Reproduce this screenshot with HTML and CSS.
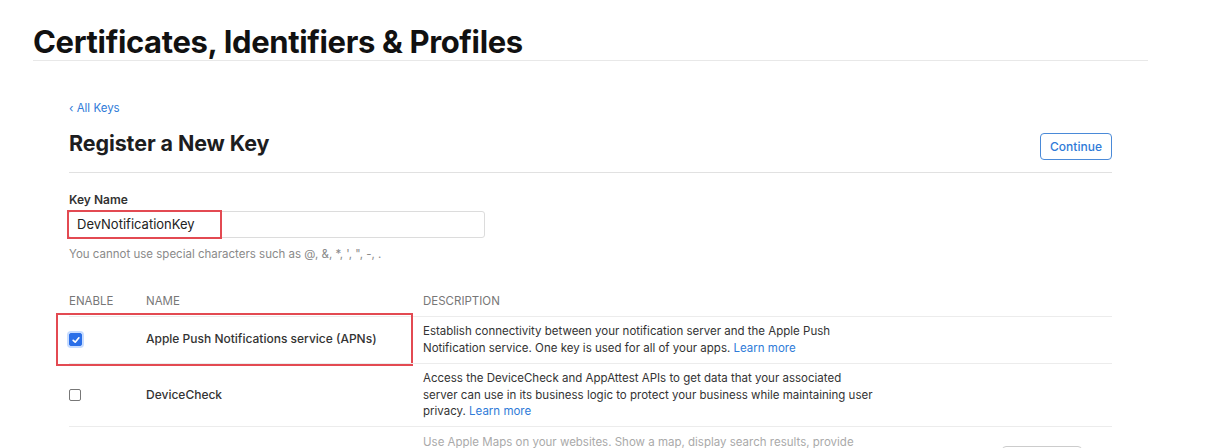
FILE: index.html
```html
<!DOCTYPE html>
<html lang="en">
<head>
<meta charset="utf-8">
<title>Register a New Key</title>
<link rel="stylesheet" href="styles.css">
</head>
<body>
<div class="page">
  <header class="top">
    <h1 class="top-title">Certificates, Identifiers &amp; Profiles</h1>
  </header>
  <main class="content">
    <a class="back" href="#">&lsaquo; All Keys</a>
    <div class="title-row">
      <h2 class="title">Register a New Key</h2>
      <button class="btn">Continue</button>
    </div>
    <div class="field">
      <label class="label">Key Name</label>
      <div class="input-wrap">
        <div class="input">DevNotificationKey</div>
        <span class="mark mark-input"></span>
      </div>
      <p class="hint">You cannot use special characters such as @, &amp;, *, ', ", -, .</p>
    </div>
    <div class="table">
      <div class="row head">
        <div>ENABLE</div><div>NAME</div><div>DESCRIPTION</div>
      </div>
      <div class="row">
        <div class="cell-check"><span class="cb checked"><svg viewBox="0 0 10 10" width="10" height="10"><path d="M2.2 5.3 L4.2 7.2 L7.9 2.8" fill="none" stroke="#fff" stroke-width="1.7" stroke-linecap="round" stroke-linejoin="round"/></svg></span></div>
        <div class="name">Apple Push Notifications service (APNs)</div>
        <div class="desc">Establish connectivity between your notification server and the Apple Push<br>Notification service. One key is used for all of your apps. <a href="#">Learn more</a></div>
        <span class="mark mark-row"></span>
      </div>
      <div class="row">
        <div class="cell-check"><span class="cb"></span></div>
        <div class="name">DeviceCheck</div>
        <div class="desc">Access the DeviceCheck and AppAttest APIs to get data that your associated<br>server can use in its business logic to protect your business while maintaining user<br>privacy. <a href="#">Learn more</a></div>
      </div>
      <div class="row disabled">
        <div class="cell-check"></div>
        <div class="name"></div>
        <div class="desc desc-flex"><span>Use Apple Maps on your websites. Show a map, display search results, provide<br>directions, and annotate locations.</span><span class="btn-ghost">Configure</span></div>
      </div>
    </div>
  </main>
</div>
</body>
</html>
```

FILE: styles.css
```css
* { box-sizing: border-box; }
html, body { margin: 0; padding: 0; overflow: hidden; background: #fff; }
body {
  font-family: Inter, "Noto Sans", "Liberation Sans", sans-serif;
  color: #333;
  font-size: 12px;
}
.page { padding: 0 72px 0 33px; }
.top { border-bottom: 1px solid #e8e8e8; padding-top: 24px; }
.top-title {
  margin: 0;
  font-size: 31px;
  line-height: 36px;
  font-weight: 700;
  color: #111;
  letter-spacing: -0.35px;
}
.content { padding: 39px 36px 0 36px; }
.back {
  display: block;
  color: #2f7bd8;
  text-decoration: none;
  font-size: 11.5px;
  line-height: 16px;
}
.title-row {
  display: flex;
  justify-content: space-between;
  align-items: flex-start;
  border-bottom: 1px solid #e1e1e1;
  padding-top: 13px;
  padding-bottom: 12px;
}
.title {
  margin: 0;
  font-size: 21.5px;
  line-height: 28px;
  font-weight: 700;
  color: #1d1d1f;
  letter-spacing: -0.1px;
}
.btn {
  margin-top: 4px;
  font-family: inherit;
  font-size: 12px;
  font-weight: 500;
  color: #2f7bd8;
  background: #fff;
  border: 1px solid #4a8ad8;
  border-radius: 4px;
  width: 72px;
  height: 27px;
  padding: 0;
}
.field { padding-top: 19px; }
.label {
  display: block;
  font-weight: 600;
  font-size: 12px;
  line-height: 16px;
  color: #333;
}
.input-wrap { position: relative; width: 417px; margin-top: 3px; margin-left: -1px; }
.input {
  height: 27px;
  border: 1px solid #dcdcdc;
  border-radius: 3px;
  font-size: 13px;
  line-height: 25px;
  padding-left: 8px;
  color: #222;
}
.mark { position: absolute; border: 2px solid #e34a52; pointer-events: none; }
.mark-input { left: -1px; top: -1px; width: 155px; height: 29px; }
.hint { margin: 8px 0 0; color: #8a8a8a; font-size: 11.5px; line-height: 16px; }
.table { margin-top: 31px; }
.row {
  position: relative;
  display: grid;
  grid-template-columns: 77px 277px 1fr;
  align-items: center;
  border-top: 1px solid #ececec;
  padding: 6.5px 0;
  line-height: 16.5px;
}
.row.head {
  border-top: none;
  color: #777;
  text-transform: uppercase;
  font-size: 11.5px;
  padding: 0 0 6px;
}
.name { color: #333; font-weight: 500; }
.desc { font-size: 11.5px; }
.desc a { color: #2f7bd8; text-decoration: none; }
.cell-check { display: flex; align-items: center; }
.cb {
  display: inline-flex;
  align-items: center;
  justify-content: center;
  width: 12px;
  height: 12px;
  border: 1px solid #777;
  border-radius: 2px;
  background: #fff;
}
.cb.checked {
  width: 13px;
  height: 13px;
  background: #2b6fe8;
  border-color: #2b6fe8;
  box-shadow: 0 0 0 2px #c7dcff;
}
.mark-row { left: -13px; top: -4px; bottom: -3px; width: 357px; }
.disabled { color: #aaa; }
.desc-flex { display: flex; justify-content: space-between; align-items: flex-start; }
.btn-ghost {
  margin-top: 12px;
  margin-right: 30px;
  border: 1px solid #ccc;
  border-radius: 4px;
  padding: 5px 12px;
  color: #aaa;
}
```
